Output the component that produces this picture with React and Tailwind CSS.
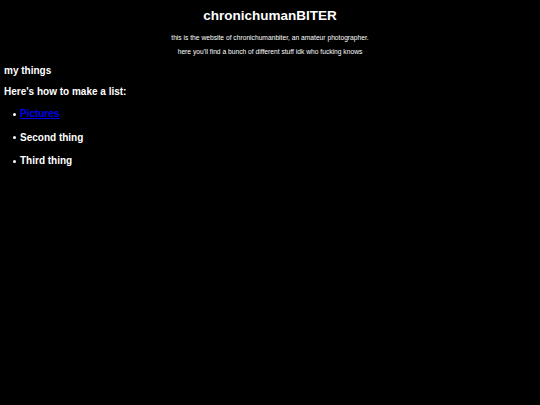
import React from 'react'

const items = ['Second thing', 'Third thing']

const Bullet = () => <span className="w-[3px] h-[3px] rounded-full bg-white ml-[8.5px] mr-[4.5px] shrink-0" />

export default function App() {
  return (
    <div className="min-h-screen bg-black text-white font-['Liberation_Sans',Arial,sans-serif]">
      {/* Header */}
      <div className="flex flex-col items-center pt-[8px]">
        <h1 className="text-[13.5px] leading-[16px] font-bold">chronichumanBITER</h1>
        <p className="text-[6.7px] leading-[8px] mt-[10px]">this is the website of chronichumanbiter, an amateur photographer.</p>
        <p className="text-[6.7px] leading-[8px] mt-[6px]">here you'll find a bunch of different stuff idk who fucking knows</p>
      </div>

      {/* Content */}
      <div className="px-[4px]">
        <h2 className="text-[10px] leading-[12px] font-bold mt-[9px]">my things</h2>
        <h3 className="text-[10px] leading-[12px] font-bold mt-[9px]">Here's how to make a list:</h3>
        <ul className="mt-[10px] text-[10px] leading-[12px] font-bold">
          <li className="flex items-center">
            <Bullet />
            <a href="#" className="text-[#0000ee] underline">Pictures</a>
          </li>
          {items.map((item) => (
            <li key={item} className="flex items-center mt-[11.5px]">
              <Bullet />
              {item}
            </li>
          ))}
        </ul>
      </div>
    </div>
  )
}
